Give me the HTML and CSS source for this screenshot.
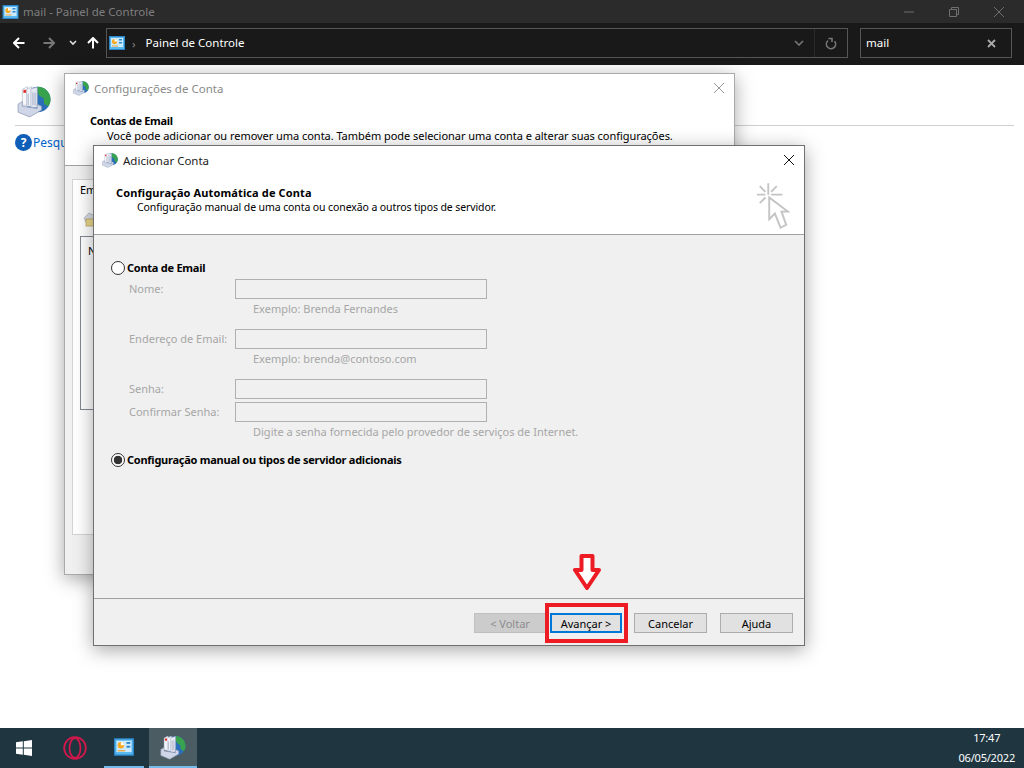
FILE: index.html
```html
<!DOCTYPE html>
<html lang="pt-BR">
<head>
    <meta charset="UTF-8">
    <title>mail - Painel de Controle</title>
    <link rel="stylesheet" href="styles.css">
</head>
<body>
    <svg class="defs" width="0" height="0">
        <symbol id="cpanel" viewBox="0 0 16 14">
            <rect x="0.5" y="0.5" width="15" height="13" fill="#58b8f0" stroke="#2a86c8"/>
            <rect x="2" y="2" width="12" height="9" fill="#cdeafc"/>
            <circle cx="5.5" cy="5.5" r="2.6" fill="#f6a821"/>
            <path d="M5.5 5.5V2.9A2.6 2.6 0 0 1 8.1 5.5Z" fill="#fff"/>
            <rect x="10" y="3" width="3" height="1.5" fill="#2a86c8"/>
            <rect x="10" y="6" width="3" height="1.5" fill="#2a86c8"/>
            <rect x="3" y="9.5" width="6" height="1" fill="#e8a33a"/>
        </symbol>
        <symbol id="mailglobe" viewBox="0 0 32 32">
            <circle cx="19.5" cy="14.5" r="12" fill="#2a6fb8"/>
            <path d="M19.5 2.5A12 12 0 0 1 31.5 14.5c0 2.5-.8 4.8-2.2 6.700l-3.800-2.700-.5-5-4-2.500-2-4z" fill="#38a34c"/>
            <path d="M5 5L10 2.500V20H5Z" fill="#f7f8fc" stroke="#aab2c8" stroke-width="0.6"/>
            <path d="M9 5L14 2.500V21H9Z" fill="#f0f2f9" stroke="#aab2c8" stroke-width="0.6"/>
            <path d="M13 4.500L19 3V22H13Z" fill="#e4e8f3" stroke="#aab2c8" stroke-width="0.6"/>
            <path d="M10.500 9V20M15 8V20M17 8V20" stroke="#9aa5bd" stroke-width="0.8"/>
            <rect x="6" y="5.500" width="2.600" height="2.800" fill="#e0332c"/>
            <path d="M1 19L5 16.500V21L19 23V19L23 21V24.500L12 31L1 26.500Z" fill="#cfd6e8" stroke="#8f99b2" stroke-width="0.7"/>
        </symbol>
        <symbol id="arrow" viewBox="0 0 12 12">
            <path d="M1 6H11.5M6 1L1 6L6 11" fill="none" stroke="currentColor" stroke-width="2"/>
        </symbol>
    </svg>

    <div class="page">
        <div class="titlebar">
            <svg class="title-icon"><use href="#cpanel"/></svg>
            <span class="title-text">mail - Painel de Controle</span>
            <div class="win-btns">
                <svg width="12" height="12" viewBox="0 0 12 12"><path d="M1 6H11" stroke="#6f6f6f"/></svg>
                <svg width="12" height="12" viewBox="0 0 12 12"><path d="M1.5 3.5h7v7h-7zM3.5 3.5v-2h7v7h-2" fill="none" stroke="#6f6f6f"/></svg>
                <svg width="12" height="12" viewBox="0 0 12 12"><path d="M1 1L11 11M11 1L1 11" stroke="#6f6f6f"/></svg>
            </div>
        </div>

        <div class="toolbar">
            <svg class="nav-arrow"><use href="#arrow"/></svg>
            <svg class="nav-arrow nav-off"><use href="#arrow" transform="rotate(180 6 6)"/></svg>
            <svg class="nav-down" viewBox="0 0 8 6"><path d="M1 1L4 4L7 1" fill="none" stroke="#ddd" stroke-width="1.6"/></svg>
            <svg class="nav-arrow nav-up"><use href="#arrow" transform="rotate(90 6 6)"/></svg>
            <div class="address">
                <svg class="addr-icon"><use href="#cpanel"/></svg>
                <span class="crumb-sep">›</span>
                <span class="crumb">Painel de Controle</span>
                <svg class="addr-down" viewBox="0 0 10 6"><path d="M1 1L5 5L9 1" fill="none" stroke="#777" stroke-width="1.6"/></svg>
                <div class="addr-refresh">
                    <svg width="12" height="13" viewBox="0 0 12 13"><path d="M3.5 1.5H7V5M9.6 4.2A4.6 4.6 0 1 1 3 3.6" fill="none" stroke="#777" stroke-width="1.6"/></svg>
                </div>
            </div>
            <div class="search">
                <span>mail</span>
                <svg width="9" height="9" viewBox="0 0 9 9"><path d="M1 1L8 8M8 1L1 8" stroke="#aaa" stroke-width="1.8"/></svg>
            </div>
        </div>

        <div class="content">
            <div class="content-head">
                <svg class="mail-icon"><use href="#mailglobe"/></svg>
                <span class="content-title">Mail</span>
            </div>
            <div class="content-help">
                <span class="help-icon">?</span>
                <span>Pesquisar</span>
            </div>

            <!-- janela de tras -->
            <div class="dialog dialog-back">
                <div class="dlg-title">
                    <svg class="dlg-icon"><use href="#mailglobe"/></svg>
                    <span>Configurações de Conta</span>
                    <svg class="dlg-close" viewBox="0 0 12 12"><path d="M1 1L11 11M11 1L1 11" stroke="#999"/></svg>
                </div>
                <div class="back-head">
                    <div class="head-bold">Contas de Email</div>
                    <div class="head-desc">Você pode adicionar ou remover uma conta. Também pode selecionar uma conta e alterar suas configurações.</div>
                </div>
                <div class="back-body">
                    <div class="tab-panel">
                        <div class="tab-name">Email</div>
                        <svg class="env-icon" viewBox="0 0 12 18">
                            <path d="M1 8l5-5 6 3v6H3z" fill="#d8dce4" stroke="#9aa3b5" stroke-width="0.6"/>
                            <rect x="3" y="9" width="9" height="7" fill="#ecd98c" stroke="#a58f45" stroke-width="0.6"/>
                        </svg>
                        <div class="list-box">Nome</div>
                    </div>
                </div>
            </div>

            <!-- janela da frente -->
            <div class="dialog dialog-front">
                <div class="dlg-title dlg-title-active">
                    <svg class="dlg-icon"><use href="#mailglobe"/></svg>
                    <span>Adicionar Conta</span>
                    <svg class="dlg-close" viewBox="0 0 12 12"><path d="M1 1L11 11M11 1L1 11" stroke="#111"/></svg>
                </div>
                <div class="front-head">
                    <div class="head-bold">Configuração Automática de Conta</div>
                    <div class="head-desc">Configuração manual de uma conta ou conexão a outros tipos de servidor.</div>
                    <svg class="cursor-icon" viewBox="0 0 36 50">
                        <g stroke="#c4c4c4" stroke-width="2" fill="none">
                            <path d="M13 1V13M1 13H10M16 13H28M4 4L10 10M22 4L16 10M4 22L10 16"/>
                            <path d="M14 16V39L20 33L26 48L32 45L27 31H34Z" fill="#fff"/>
                        </g>
                    </svg>
                </div>
                <div class="front-body">
                    <label class="radio-row">
                        <span class="radio"></span>Conta de Email
                    </label>
                    <div class="field-row row-first">
                        <span class="field-label">Nome:</span>
                        <span class="field-input"></span>
                    </div>
                    <div class="field-hint">Exemplo: Brenda Fernandes</div>
                    <div class="field-row row-next">
                        <span class="field-label">Endereço de Email:</span>
                        <span class="field-input"></span>
                    </div>
                    <div class="field-hint">Exemplo: brenda@contoso.com</div>
                    <div class="field-row row-next">
                        <span class="field-label">Senha:</span>
                        <span class="field-input"></span>
                    </div>
                    <div class="field-row row-close">
                        <span class="field-label">Confirmar Senha:</span>
                        <span class="field-input"></span>
                    </div>
                    <div class="field-hint">Digite a senha fornecida pelo provedor de serviços de Internet.</div>
                    <label class="radio-row radio-manual">
                        <span class="radio radio-on"></span>Configuração manual ou tipos de servidor adicionais
                    </label>
                </div>
                <div class="front-foot">
                    <button class="btn btn-off">&lt; Voltar</button>
                    <button class="btn btn-main">Avançar &gt;</button>
                    <button class="btn btn-cancel">Cancelar</button>
                    <button class="btn btn-help">Ajuda</button>
                </div>
            </div>

            <!-- marcacao vermelha -->
            <svg class="mark-arrow" viewBox="0 0 28 36">
                <path d="M8.5 2H19.5V16H26L14 34L2 16H8.5Z" fill="#fff" stroke="#ed1c24" stroke-width="4" stroke-linejoin="round"/>
            </svg>
            <div class="mark-box"></div>
        </div>

        <div class="taskbar">
            <svg class="start" viewBox="0 0 16 16"><path d="M0 2.3L6.8 1.3V7.5H0ZM7.8 1.2L16 0V7.5H7.8ZM0 8.5H6.8V14.7L0 13.7ZM7.8 8.5H16V16L7.8 14.8Z" fill="#fff"/></svg>
            <div class="task-item task-opera">
                <svg width="24" height="24" viewBox="0 0 24 24"><circle cx="12" cy="12" r="10.8" fill="none" stroke="#d3174a" stroke-width="1.8"/><ellipse cx="12" cy="12" rx="5.5" ry="9.8" fill="none" stroke="#d3174a" stroke-width="1.8"/></svg>
            </div>
            <div class="task-item task-open"><svg width="20" height="18"><use href="#cpanel"/></svg></div>
            <div class="task-item task-open task-active"><svg width="26" height="26"><use href="#mailglobe"/></svg></div>
            <div class="clock">
                <div>17:47</div>
                <div>06/05/2022</div>
            </div>
        </div>
    </div>
</body>
</html>
```

FILE: styles.css
```css
* {
    box-sizing: border-box;
}

html, body {
    margin: 0;
    height: 100%;
    overflow: hidden;
}

body {
    font-family: 'Noto Sans', 'Open Sans', sans-serif;
    font-size: 11px;
    color: #000;
}

.defs {
    position: absolute;
}

.page {
    display: flex;
    flex-direction: column;
    height: 768px;
}

/* barra de titulo */
.titlebar {
    height: 23px;
    background: #2b2b2b;
    display: flex;
    align-items: center;
    padding-left: 2px;
    color: #7f7f7f;
    font-size: 11.5px;
}

.title-icon {
    width: 17px;
    height: 14px;
    margin-right: 4px;
}

.win-btns {
    margin-left: auto;
    display: flex;
    gap: 33px;
    padding-right: 19px;
}

/* barra de navegacao */
.toolbar {
    height: 42px;
    background: #191919;
    display: flex;
    align-items: center;
    padding: 0 0 2px 13px;
    color: #fff;
}

.nav-arrow {
    width: 12px;
    height: 12px;
    color: #fff;
    margin-right: 18px;
}

.nav-off {
    color: #777;
    margin-right: 14px;
}

.nav-down {
    width: 8px;
    height: 6px;
    margin-right: 10px;
}

.nav-up {
    margin-right: 7px;
}

.address {
    width: 742px;
    height: 30px;
    border: 1px solid #555;
    display: flex;
    align-items: center;
    padding-left: 2px;
    font-size: 11.5px;
}

.addr-icon {
    width: 16px;
    height: 14px;
}

.crumb-sep {
    color: #888;
    margin: 0 10px 0 7px;
}

.crumb {
    padding-bottom: 2px;
}

.addr-down {
    width: 10px;
    height: 6px;
    margin-left: auto;
    margin-right: 10px;
}

.addr-refresh {
    width: 33px;
    height: 28px;
    border-left: 1px solid #2a2a2a;
    display: flex;
    align-items: center;
    justify-content: center;
}

.search {
    width: 152px;
    height: 30px;
    margin-left: 12px;
    border: 1px solid #555;
    display: flex;
    align-items: center;
    justify-content: space-between;
    padding: 0 15px 0 5px;
    font-size: 11.5px;
}

.search span {
    padding-bottom: 2px;
}

/* area de conteudo */
.content {
    position: relative;
    flex: 1;
    background: #fff;
}

.content-head {
    height: 61px;
    margin: 0 10px 0 15px;
    border-bottom: 1px solid #d0d0d0;
    display: flex;
    align-items: center;
    padding: 12px 0 0 2px;
}

.mail-icon {
    width: 34px;
    height: 34px;
}

.content-title {
    margin: 0 0 5px 12px;
    font-size: 18px;
    color: #006837;
}

.content-help {
    display: flex;
    align-items: center;
    gap: 1px;
    margin: 8px 0 0 15px;
    font-size: 12px;
    color: #0066cc;
}

.help-icon {
    width: 17px;
    height: 17px;
    border-radius: 50%;
    background: #0f5fb8;
    color: #fff;
    font-weight: 700;
    text-align: center;
    line-height: 17px;
}

/* janelas */
.dialog {
    position: absolute;
    display: flex;
    flex-direction: column;
    background: #fff;
    border: 1px solid #8f8f8f;
    box-shadow: 0 4px 18px rgba(0, 0, 0, 0.35);
}

.dialog-back {
    left: 64px;
    top: 8px;
    width: 671px;
    height: 502px;
    border-color: #aaa;
}

.dialog-front {
    left: 93px;
    top: 80px;
    width: 712px;
    height: 501px;
    border-color: #707070;
}

.dlg-title {
    height: 30px;
    flex: none;
    display: flex;
    align-items: center;
    padding: 0 9px 2px 8px;
    gap: 5px;
    font-size: 11.5px;
    color: #8a8a8a;
}

.dlg-title-active {
    color: #222;
}

.dlg-icon {
    width: 16px;
    height: 16px;
}

.dlg-close {
    width: 12px;
    height: 12px;
    margin-left: auto;
}

.head-bold {
    font-weight: 700;
}

.back-head {
    height: 62px;
    flex: none;
    padding: 9px 24px 0 25px;
    border-bottom: 1px solid #a0a0a0;
}

.back-head .head-bold {
    letter-spacing: -0.3px;
}

.back-head .head-desc {
    margin-left: 17px;
    letter-spacing: -0.04px;
}

.back-body {
    flex: 1;
    background: #f0f0f0;
    padding: 13px 6px 39px 7px;
}

.tab-panel {
    height: 100%;
    padding: 0 7px;
    background: #fff;
    border: 1px solid #d4d4d4;
}

.tab-name {
    padding-top: 2px;
}

.env-icon {
    display: block;
    width: 12px;
    height: 18px;
    margin: 13px 0 0 3px;
}

.list-box {
    height: 174px;
    margin-top: 8px;
    padding: 6px 7px;
    border: 1px solid #828790;
}

.front-head {
    position: relative;
    height: 59px;
    flex: none;
    padding: 9px 22px;
    border-bottom: 1px solid #a0a0a0;
}

.front-head .head-bold {
    letter-spacing: 0.12px;
}

.front-head .head-desc {
    margin-left: 21px;
    font-size: 10.5px;
    letter-spacing: -0.1px;
}

.cursor-icon {
    position: absolute;
    right: 14px;
    top: 6px;
    width: 34px;
    height: 48px;
}

.front-body {
    flex: 1;
    background: #f0f0f0;
    padding: 26px 17px 0;
}

.radio-row {
    display: flex;
    align-items: center;
    gap: 2px;
    height: 14px;
    padding-bottom: 1px;
    font-weight: 700;
    letter-spacing: -0.25px;
}

.radio {
    width: 14px;
    height: 14px;
    border: 1px solid #333;
    border-radius: 50%;
    background: #fff;
}

.radio-on {
    background: radial-gradient(circle, #333 0, #333 4px, #fff 4.6px);
}

.radio-manual {
    margin-top: 13px;
}

.field-row {
    display: flex;
    align-items: center;
    height: 20px;
    padding-left: 18px;
    color: #a6a6a6;
}

.row-first {
    margin-top: 4px;
}

.row-next {
    margin-top: 12px;
}

.row-close {
    margin-top: 3px;
}

.field-label {
    width: 106px;
    flex: none;
    padding-bottom: 2px;
}

.field-input {
    width: 252px;
    height: 20px;
    border: 1px solid #b0b0b0;
}

.field-hint {
    margin: 2px 0 0 142px;
    height: 16px;
    color: #a6a6a6;
}

.front-foot {
    height: 47px;
    flex: none;
    background: #f0f0f0;
    border-top: 1px solid #a0a0a0;
    display: flex;
    align-items: flex-start;
    padding: 14px 0 0 380px;
}

.btn {
    width: 73px;
    height: 20px;
    padding: 0;
    background: #e1e1e1;
    border: 1px solid #adadad;
    font-family: inherit;
    font-size: 11px;
    color: #000;
}

.btn-off {
    width: 72px;
    background: #cccccc;
    border-color: #bfbfbf;
    color: #8c8c8c;
}

.btn-main {
    width: 72px;
    margin-left: 4px;
    border: 2px solid #0078d7;
}

.btn-cancel {
    margin-left: 12px;
}

.btn-help {
    margin-left: 13px;
}

/* marcacao */
.mark-arrow {
    position: absolute;
    left: 573px;
    top: 489px;
    width: 28px;
    height: 36px;
}

.mark-box {
    position: absolute;
    left: 545px;
    top: 538px;
    width: 83px;
    height: 40px;
    border: 4px solid #ed1c24;
}

/* barra de tarefas */
.taskbar {
    height: 40px;
    background: #1f3641;
    display: flex;
    align-items: stretch;
    color: #fff;
    font-size: 11px;
}

.start {
    width: 16px;
    height: 16px;
    margin: 12px 0 0 16px;
}

.task-item {
    display: flex;
    align-items: center;
    justify-content: center;
}

.task-opera {
    width: 24px;
    margin-left: 31px;
}

.task-open {
    width: 40px;
    margin-left: 17px;
    border-bottom: 2px solid #76b9ed;
}

.task-active {
    width: 48px;
    margin-left: 5px;
    background: #4b5c62;
}

.clock {
    margin-left: auto;
    padding-right: 9px;
    text-align: center;
    line-height: 20px;
    letter-spacing: -0.2px;
}
```
